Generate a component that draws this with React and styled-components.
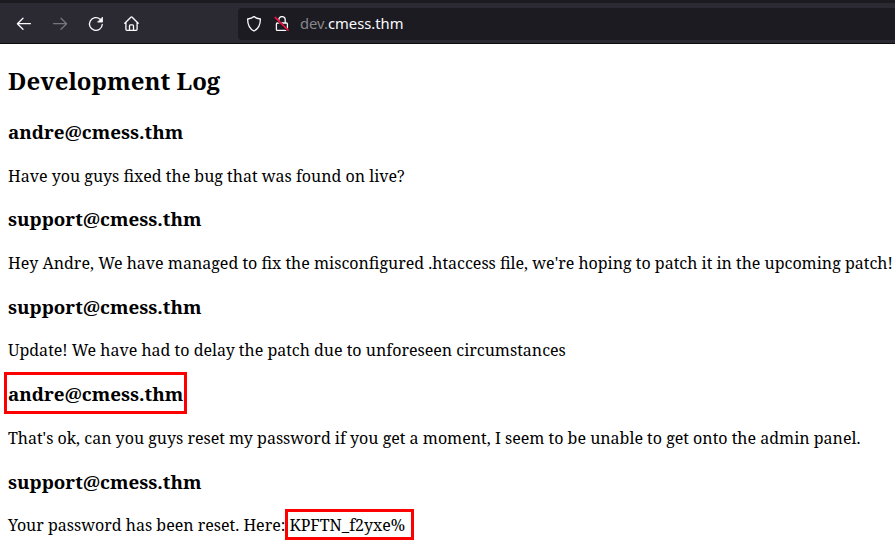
import React from "react";
import styled, { createGlobalStyle } from "styled-components";

const GlobalStyle = createGlobalStyle`
  *, *::after { box-sizing: border-box; }
  html, body { margin: 0; background: #fff; overflow: hidden; }
`;

const Page = styled.div`
  width: 895px;
  height: 560px;
  overflow: hidden;
  color: #000;
  font-family: "Noto Serif", "Droid Serif", "Liberation Serif", serif;
`;

const Toolbar = styled.header`
  display: flex;
  align-items: center;
  height: 44px;
  padding: 4px 0 2px 16px;
  background: #2b2a33;
  border-top: 3px solid #1c1b22;
  border-bottom: 1px solid #0c0c0d;
`;

const NavButtons = styled.nav`
  display: flex;
  gap: 20px;
  width: 222px;
`;

const NavButton = styled.button`
  display: flex;
  width: 16px;
  height: 16px;
  padding: 0;
  border: 0;
  background: none;
  color: ${({ $muted }) => ($muted ? "#77767c" : "#fbfbfe")};
`;

const AddressBar = styled.div`
  display: flex;
  flex: 1;
  align-items: center;
  height: 32px;
  padding-left: 8px;
  border-radius: 4px 0 0 4px;
  background: #1c1b22;
  color: #fbfbfe;
`;

const BarIcon = styled.span`
  display: flex;
  width: 16px;
  margin-right: 12px;
`;

const Address = styled.span`
  margin: 0 0 2px -2px;
  font: 14.75px/20px "Noto Sans", sans-serif;
  white-space: pre;
`;

const Subdomain = styled.span`
  color: #87868c;
`;

const Log = styled.main`
  padding: 19px 8px 0;
`;

const Title = styled.h1`
  margin: 0 0 21px;
  font-size: 24px;
  line-height: 36px;
  white-space: nowrap;
`;

const Author = styled.h2`
  margin: 0 0 18.52px;
  font-size: 18.8px;
  line-height: 25px;
  white-space: nowrap;
`;

const Message = styled.p`
  margin: 0 0 18.92px;
  font-size: 16px;
  line-height: 25px;
  white-space: nowrap;
`;

const Mark = styled.span`
  position: relative;
  &::after {
    content: "";
    position: absolute;
    top: ${({ $box }) => $box[0]}px;
    left: ${({ $box }) => $box[1]}px;
    width: ${({ $box }) => $box[2]}px;
    height: ${({ $box }) => $box[3]}px;
    border: 3px solid #f00;
  }
`;

const Icon = ({ children }) => (
  <svg width="16" height="16" viewBox="0 0 16 16" fill="none" stroke="currentColor" strokeWidth="1.3" strokeLinecap="round" strokeLinejoin="round">
    {children}
  </svg>
);

const entries = [
  ["andre@cmess.thm", "Have you guys fixed the bug that was found on live?"],
  ["support@cmess.thm", "Hey Andre, We have managed to fix the misconfigured .htaccess file, we're hoping to patch it in the upcoming patch!"],
  ["support@cmess.thm", "Update! We have had to delay the patch due to unforeseen circumstances"],
  [<Mark $box={[-9, -4, 183, 42]}>andre@cmess.thm</Mark>, "That's ok, can you guys reset my password if you get a moment, I seem to be unable to get onto the admin panel."],
  ["support@cmess.thm", <>Your password has been reset. Here: <Mark $box={[-5, -5, 129, 31]}>KPFTN_f2yxe%</Mark></>],
];

export default function App() {
  return (
    <Page>
      <GlobalStyle />
      <Toolbar>
        <NavButtons>
          <NavButton aria-label="Back"><Icon><path d="M14.4 7.7H1.6M7 2.2 1.4 7.7 7 13.2" /></Icon></NavButton>
          <NavButton aria-label="Forward" $muted><Icon><path d="M1.6 7.7h12.8M9 2.2 14.6 7.7 9 13.2" /></Icon></NavButton>
          <NavButton aria-label="Reload"><Icon><path d="M12.2 3.2A6.4 6.4 0 1 0 14.3 8.3" /><path d="M14.5 1.5v4.6H9.9z" fill="currentColor" strokeWidth=".8" /></Icon></NavButton>
          <NavButton aria-label="Home"><Icon><path d="M.8 7.2 6.8 1.2q.7-.7 1.4 0l6 6M1.9 6.3v7q0 1 1 1h9.2q1 0 1-1v-7M5.5 14.2V9.8q0-.9.9-.9h2.2q.9 0 .9.9v4.4" /></Icon></NavButton>
        </NavButtons>
        <AddressBar>
          <BarIcon><Icon><path d="M8 .6C6.5 2 4 2.8 1.6 3 1.6 8.6 3.8 13 8 15c4.2-2 6.4-6.4 6.4-12C12 2.8 9.5 2 8 .6Z" /></Icon></BarIcon>
          <BarIcon><Icon><path d="M4.8 7V3.8a3.2 3.2 0 0 1 6.4 0V7M3.4 7h9q1 0 1 1v5.4q0 1-1 1h-9q-1 0-1-1V8q0-1 1-1Z" /><path d="m1.3 2 12.8 12.6" stroke="#1c1b22" strokeWidth="2.4" /><path d="m1.2 1.4 13 12.9" stroke="#ff0f42" strokeWidth="1.5" /></Icon></BarIcon>
          <Address><Subdomain>dev.</Subdomain>cmess.thm</Address>
        </AddressBar>
      </Toolbar>
      <Log>
        <Title>Development Log</Title>
        {entries.map(([author, message], index) => (
          <React.Fragment key={index}>
            <Author>{author}</Author>
            <Message>{message}</Message>
          </React.Fragment>
        ))}
      </Log>
    </Page>
  );
}
